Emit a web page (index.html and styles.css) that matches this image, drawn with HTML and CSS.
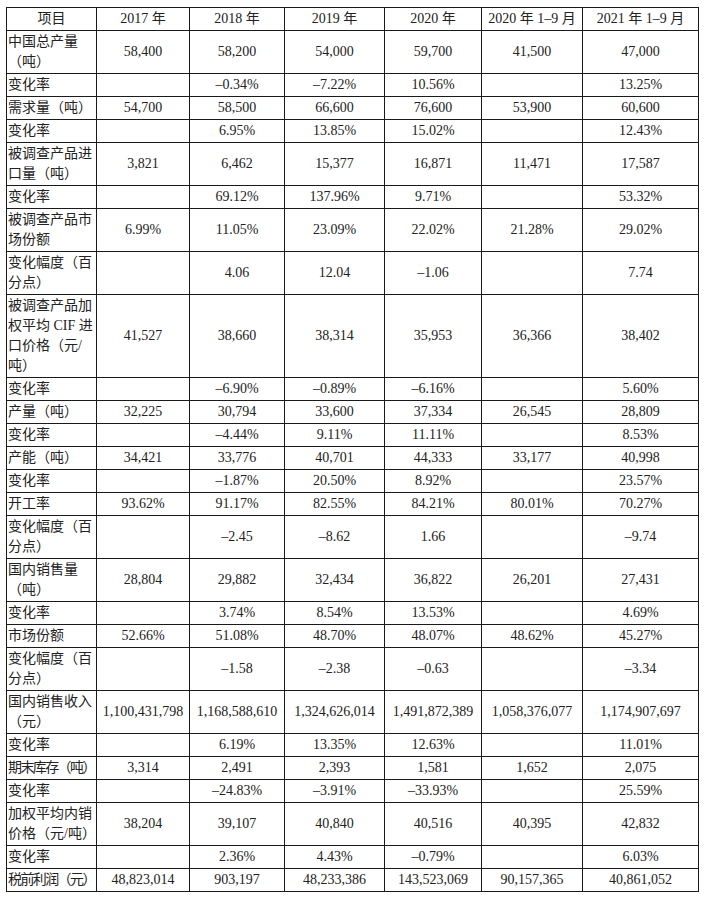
FILE: index.html
```html
<!DOCTYPE html>
<html lang="zh">
<head>
<meta charset="utf-8">
<link rel="stylesheet" href="styles.css">
</head>
<body>
<table class="data">
<colgroup>
<col class="c0"><col class="c1"><col class="c2"><col class="c3"><col class="c4"><col class="c5"><col class="c6">
</colgroup>
<thead>
<tr><th>项目</th><th>2017 年</th><th>2018 年</th><th>2019 年</th><th>2020 年</th><th>2020 年 1–9 月</th><th>2021 年 1–9 月</th></tr>
</thead>
<tbody>
<tr><td class="lbl">中国总产量<br>（吨）</td><td>58,400</td><td>58,200</td><td>54,000</td><td>59,700</td><td>41,500</td><td>47,000</td></tr>
<tr><td class="lbl">变化率</td><td></td><td>–0.34%</td><td>–7.22%</td><td>10.56%</td><td></td><td>13.25%</td></tr>
<tr><td class="lbl">需求量（吨）</td><td>54,700</td><td>58,500</td><td>66,600</td><td>76,600</td><td>53,900</td><td>60,600</td></tr>
<tr><td class="lbl">变化率</td><td></td><td>6.95%</td><td>13.85%</td><td>15.02%</td><td></td><td>12.43%</td></tr>
<tr><td class="lbl">被调查产品进<br>口量（吨）</td><td>3,821</td><td>6,462</td><td>15,377</td><td>16,871</td><td>11,471</td><td>17,587</td></tr>
<tr><td class="lbl">变化率</td><td></td><td>69.12%</td><td>137.96%</td><td>9.71%</td><td></td><td>53.32%</td></tr>
<tr><td class="lbl">被调查产品市<br>场份额</td><td>6.99%</td><td>11.05%</td><td>23.09%</td><td>22.02%</td><td>21.28%</td><td>29.02%</td></tr>
<tr><td class="lbl">变化幅度（百<br>分点）</td><td></td><td>4.06</td><td>12.04</td><td>–1.06</td><td></td><td>7.74</td></tr>
<tr><td class="lbl">被调查产品加<br>权平均 CIF 进<br>口价格（元/<br>吨）</td><td>41,527</td><td>38,660</td><td>38,314</td><td>35,953</td><td>36,366</td><td>38,402</td></tr>
<tr><td class="lbl">变化率</td><td></td><td>–6.90%</td><td>–0.89%</td><td>–6.16%</td><td></td><td>5.60%</td></tr>
<tr><td class="lbl">产量（吨）</td><td>32,225</td><td>30,794</td><td>33,600</td><td>37,334</td><td>26,545</td><td>28,809</td></tr>
<tr><td class="lbl">变化率</td><td></td><td>–4.44%</td><td>9.11%</td><td>11.11%</td><td></td><td>8.53%</td></tr>
<tr><td class="lbl">产能（吨）</td><td>34,421</td><td>33,776</td><td>40,701</td><td>44,333</td><td>33,177</td><td>40,998</td></tr>
<tr><td class="lbl">变化率</td><td></td><td>–1.87%</td><td>20.50%</td><td>8.92%</td><td></td><td>23.57%</td></tr>
<tr><td class="lbl">开工率</td><td>93.62%</td><td>91.17%</td><td>82.55%</td><td>84.21%</td><td>80.01%</td><td>70.27%</td></tr>
<tr><td class="lbl">变化幅度（百<br>分点）</td><td></td><td>–2.45</td><td>–8.62</td><td>1.66</td><td></td><td>–9.74</td></tr>
<tr><td class="lbl">国内销售量<br>（吨）</td><td>28,804</td><td>29,882</td><td>32,434</td><td>36,822</td><td>26,201</td><td>27,431</td></tr>
<tr><td class="lbl">变化率</td><td></td><td>3.74%</td><td>8.54%</td><td>13.53%</td><td></td><td>4.69%</td></tr>
<tr><td class="lbl">市场份额</td><td>52.66%</td><td>51.08%</td><td>48.70%</td><td>48.07%</td><td>48.62%</td><td>45.27%</td></tr>
<tr><td class="lbl">变化幅度（百<br>分点）</td><td></td><td>–1.58</td><td>–2.38</td><td>–0.63</td><td></td><td>–3.34</td></tr>
<tr><td class="lbl">国内销售收入<br>（元）</td><td>1,100,431,798</td><td>1,168,588,610</td><td>1,324,626,014</td><td>1,491,872,389</td><td>1,058,376,077</td><td>1,174,907,697</td></tr>
<tr><td class="lbl">变化率</td><td></td><td>6.19%</td><td>13.35%</td><td>12.63%</td><td></td><td>11.01%</td></tr>
<tr><td class="lbl tight">期末库存（吨）</td><td>3,314</td><td>2,491</td><td>2,393</td><td>1,581</td><td>1,652</td><td>2,075</td></tr>
<tr><td class="lbl">变化率</td><td></td><td>–24.83%</td><td>–3.91%</td><td>–33.93%</td><td></td><td>25.59%</td></tr>
<tr><td class="lbl">加权平均内销<br>价格（元/吨）</td><td>38,204</td><td>39,107</td><td>40,840</td><td>40,516</td><td>40,395</td><td>42,832</td></tr>
<tr><td class="lbl">变化率</td><td></td><td>2.36%</td><td>4.43%</td><td>–0.79%</td><td></td><td>6.03%</td></tr>
<tr><td class="lbl tight">税前利润（元）</td><td>48,823,014</td><td>903,197</td><td>48,233,386</td><td>143,523,069</td><td>90,157,365</td><td>40,861,052</td></tr>
</tbody>
</table>
</body>
</html>
```
FILE: styles.css
```css
html, body {
  margin: 0;
  padding: 0;
  background: #ffffff;
}
body {
  padding: 7px 0 0 6px;
  font-family: "Liberation Serif", "Noto Sans CJK SC", serif;
  font-size: 14px;
  color: #222222;
}
.data {
  border-collapse: collapse;
  table-layout: fixed;
  width: 693px;
}
.c0 { width: 90px; }
.c1 { width: 93px; }
.c2 { width: 95px; }
.c3 { width: 100px; }
.c4 { width: 97px; }
.c5 { width: 101px; }
.c6 { width: 116px; }
.data th,
.data td {
  border: 1px solid #1a1a1a;
  padding: 1px 1px;
  line-height: 20px;
  text-align: center;
  vertical-align: middle;
  font-weight: normal;
  white-space: nowrap;
  overflow: hidden;
}
.data td.lbl {
  text-align: left;
  padding-left: 1px;
}
.data td.tight {
  letter-spacing: -1.6px;
}
```
